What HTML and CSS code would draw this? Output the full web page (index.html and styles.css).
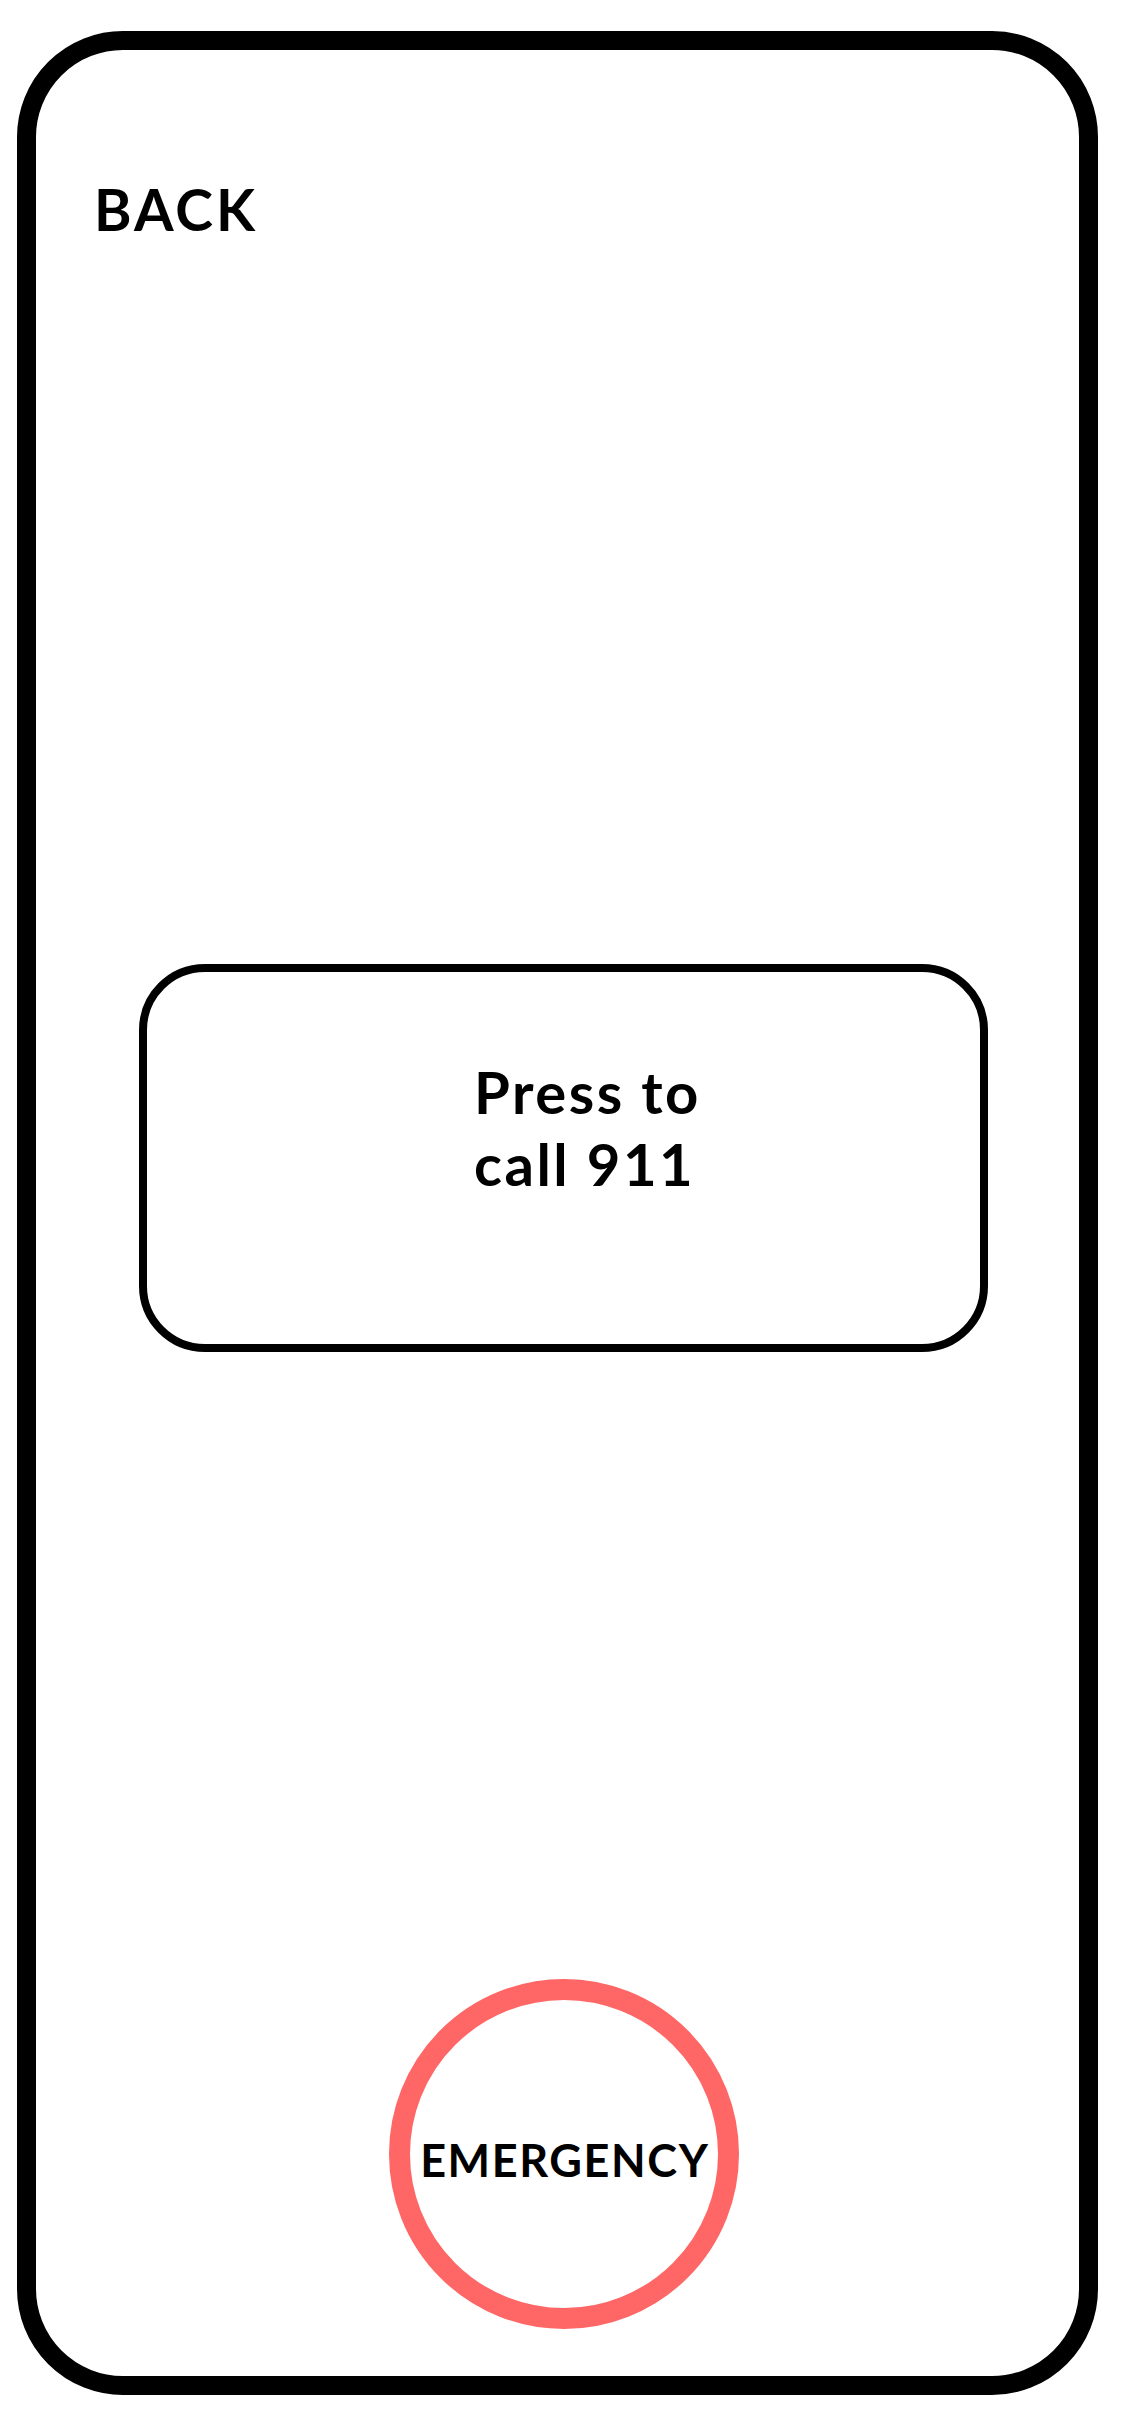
FILE: index.html
```html
<!DOCTYPE html>
<html lang="en">
<head>
    <meta charset="UTF-8">
    <meta name="viewport" content="width=device-width, initial-scale=1.0">
    <title>Emergency</title>
    <link rel="stylesheet" href="styles.css">
</head>
<body>
    <div class="phone">
        <div class="back">BACK</div>

        <div class="call-card">
            <div class="call-text">Press to<br>call 911</div>
        </div>

        <div class="emergency-btn">
            <span class="emergency-label">EMERGENCY</span>
        </div>
    </div>
</body>
</html>
```

FILE: styles.css
```css
* {
    box-sizing: border-box;
}

body {
    margin: 0;
    background: #fff;
    font-family: "Lato", "Liberation Sans", sans-serif;
    font-weight: 700;
    color: #000;
}

.phone {
    width: 1081px;
    height: 2364px;
    margin: 31px 0 0 17px;
    border: 19px solid #000;
    border-radius: 106px;
    display: flex;
    flex-direction: column;
}

.back {
    font-size: 57px;
    line-height: 1;
    letter-spacing: 3px;
    padding: 131px 0 0 58px;
}

.call-card {
    width: 849px;
    height: 388px;
    margin: 726px 0 0 103px;
    border: 8px solid #000;
    border-radius: 66px;
    padding: 84px 0 0 327px;
}

.call-text {
    font-size: 58px;
    line-height: 72px;
    letter-spacing: 2.5px;
}

.emergency-btn {
    width: 350px;
    height: 350px;
    margin: auto 0 47px 353px;
    border: 21px solid #ff6666;
    border-radius: 50%;
    display: flex;
    align-items: center;
    justify-content: center;
}

.emergency-label {
    font-size: 45px;
    line-height: 1;
    letter-spacing: 1.6px;
    padding: 12px 0 0 1.6px;
}
```
